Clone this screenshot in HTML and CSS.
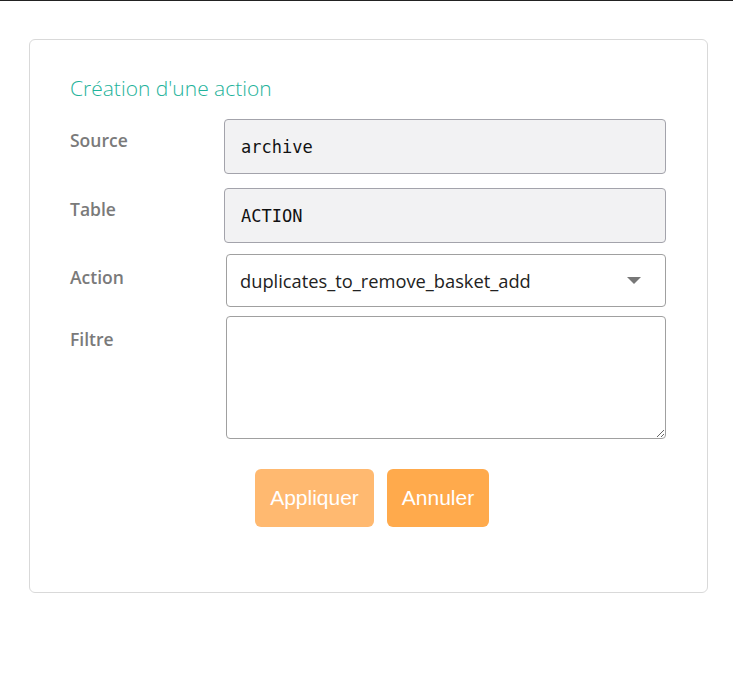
FILE: index.html
```html
<!DOCTYPE html>
<html lang="fr">
<head>
    <meta charset="UTF-8">
    <meta name="viewport" content="width=device-width, initial-scale=1.0">
    <title>Création d'une action</title>
    <link rel="stylesheet" href="styles.css">
</head>
<body>
    <div class="page">
        <div class="card">
            <h2 class="card-title">Création d'une action</h2>

            <form class="action-form">
                <div class="form-row">
                    <label class="form-label">Source</label>
                    <input type="text" class="form-input readonly" value="archive" readonly>
                </div>
                <div class="form-row">
                    <label class="form-label">Table</label>
                    <input type="text" class="form-input readonly" value="ACTION" readonly>
                </div>
                <div class="form-row">
                    <label class="form-label">Action</label>
                    <div class="select-box">
                        <span class="select-value">duplicates_to_remove_basket_add</span>
                        <span class="select-arrow"></span>
                    </div>
                </div>
                <div class="form-row">
                    <label class="form-label">Filtre</label>
                    <textarea class="form-textarea"></textarea>
                </div>

                <div class="form-buttons">
                    <button type="button" class="btn btn-apply">Appliquer</button>
                    <button type="button" class="btn btn-cancel">Annuler</button>
                </div>
            </form>
        </div>
    </div>
</body>
</html>
```

FILE: styles.css
```css
body {
    margin: 0;
    padding: 0;
    background-color: white;
    font-family: "Open Sans", "Noto Sans", sans-serif;
    border-top: 1px solid #222;
}

.page {
    padding: 38px 25px 0 29px;
}

.card {
    width: 679px;
    height: 554px;
    box-sizing: border-box;
    border: 1px solid #d9d9d9;
    border-radius: 6px;
    padding: 34px 41px 0 40px;
}

.card-title {
    margin: 0 0 17px 0;
    font-size: 21px;
    font-weight: 300;
    line-height: 28px;
    color: #1fb39b;
}

.form-row {
    display: flex;
    align-items: flex-start;
}

.form-label {
    width: 154px;
    flex-shrink: 0;
    padding-top: 9px;
    font-size: 17.5px;
    font-weight: 600;
    color: #7a7a7a;
}

.form-input {
    width: 442px;
    height: 55px;
    box-sizing: border-box;
    margin-bottom: 14px;
    padding: 0 16px;
    border: 1px solid #a3a3ab;
    border-radius: 4px;
    font-family: "DejaVu Sans Mono", monospace;
    font-size: 17px;
    color: #111;
}

.form-row:nth-child(2) .form-input {
    margin-bottom: 11px;
}

.readonly {
    background-color: #f2f2f3;
}

.select-box {
    width: 440px;
    height: 53px;
    box-sizing: border-box;
    margin-left: 2px;
    margin-bottom: 9px;
    padding: 0 24px 0 13px;
    border: 1px solid #a0a0a0;
    border-radius: 4px;
    display: flex;
    align-items: center;
    justify-content: space-between;
}

.select-value {
    font-size: 18.3px;
    color: #222;
}

.select-arrow {
    width: 0;
    height: 0;
    border-left: 7px solid transparent;
    border-right: 7px solid transparent;
    border-top: 7px solid #777;
}

.form-row:nth-child(3) .form-label {
    padding-top: 11px;
}

.form-row:nth-child(4) .form-label {
    padding-top: 11px;
}

.form-textarea {
    width: 440px;
    height: 123px;
    box-sizing: border-box;
    margin: 0 0 0 2px;
    border: 1px solid #a0a0a0;
    border-radius: 4px;
    resize: vertical;
    display: block;
}

.form-buttons {
    display: flex;
    gap: 13px;
    padding-left: 185px;
    margin-top: 30px;
}

.btn {
    height: 58px;
    border: none;
    border-radius: 6px;
    color: white;
    font-family: "Liberation Sans", Arial, sans-serif;
    font-size: 21px;
    cursor: pointer;
}

.btn-apply {
    width: 119px;
    background-color: #ffb970;
}

.btn-cancel {
    width: 102px;
    background-color: #ffaa4c;
}
```
